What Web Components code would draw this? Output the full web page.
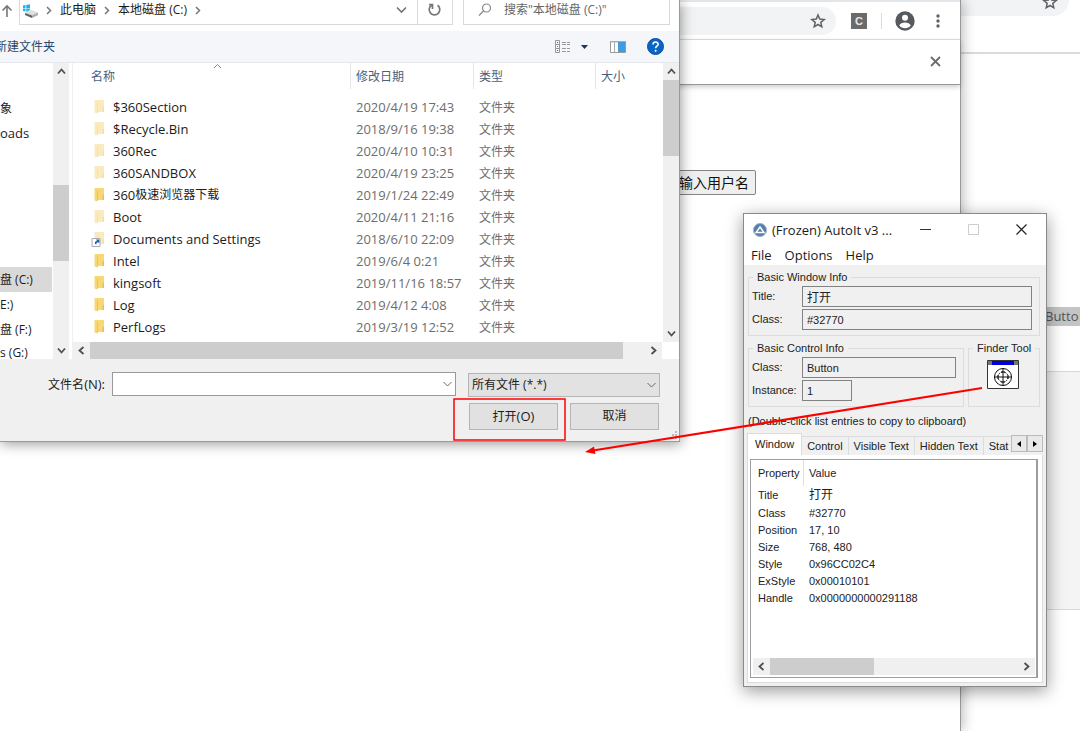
<!DOCTYPE html>
<html lang="zh-CN">
<head>
<meta charset="utf-8">
<title>打开</title>
<style>
html,body{margin:0;height:100%;background:#fff}
body{font:13px/18px "Open Sans","Noto Sans CJK SC",sans-serif;color:#1b1b1b;overflow:hidden}
</style>
</head>
<body>
<desktop-scene>
  <back-browser></back-browser>
  <front-browser></front-browser>
  <file-dialog></file-dialog>
  <autoit-window></autoit-window>
  <callout-marks></callout-marks>
</desktop-scene>
<script>
function define(name, html){
  const t=document.createElement('template');
  t.innerHTML='<style>*{box-sizing:border-box}:host{box-sizing:border-box}button,input,select{font:inherit;color:inherit;margin:0;border-radius:0;outline:none}.zh{font-size:12px}</style>'+html;
  customElements.define(name,class extends HTMLElement{
    constructor(){super();this.attachShadow({mode:'open'}).append(t.content.cloneNode(true));}
  });
}

define('desktop-scene',`
<style>:host{display:block;position:relative;width:100%;height:100vh;overflow:hidden;background:#fff}</style><slot></slot>`);

define('star-icon',`
<style>:host{display:block;width:16px;height:16px}svg{display:block}</style>
<svg width="16" height="16" viewBox="0 0 16 16" fill="none" stroke="#5f6368" stroke-width="1.5"><path d="M8 2l1.7 4.1 4.5.4-3.4 2.9 1 4.4L8 11.5l-3.8 2.3 1-4.4L1.800 6.500l4.500-.4z"/></svg>`);

customElements.define('scroll-bar',class extends HTMLElement{
  constructor(){
    super();
    this.attachShadow({mode:'open'}).innerHTML=`
<style>
:host{display:flex;box-sizing:border-box;background:#f0f0f0;flex:none;height:17px}
:host([vertical]){flex-direction:column;width:16px;height:auto}
button{border:0;padding:0;background:none;width:17px;height:17px;display:grid;place-items:center;flex:none}
:host([vertical]) button{width:16px}
.track{flex:1;display:flex;min-width:0;min-height:0}
:host([vertical]) .track{flex-direction:column}
.before{flex:0 0 var(--before,0%)}
.thumb{flex:0 0 var(--thumb,50%);background:#cdcdcd}
svg{fill:none;stroke:#505050;stroke-width:1.800}
svg.a{transform:rotate(-90deg)}svg.b{transform:rotate(90deg)}
:host([vertical]) svg.a{transform:none}:host([vertical]) svg.b{transform:rotate(180deg)}
</style>
<button aria-label="后退"><svg class="a" width="9" height="9" viewBox="0 0 9 9"><path d="M1 6.500l3.500-4 3.500 4"/></svg></button>
<div class="track"><div class="before"></div><div class="thumb"></div></div>
<button aria-label="前进"><svg class="b" width="9" height="9" viewBox="0 0 9 9"><path d="M1 6.500l3.500-4 3.500 4"/></svg></button>`;
  }
});

define('back-browser',`
<style>
:host{position:absolute;left:960px;right:0;top:0;bottom:0;display:flex;flex-direction:column;background:#fff}
.bar{height:54px;border-bottom:2px solid #dadada;padding-right:11px}
.pill{height:16px;background:#f1f3f4;border-radius:0 0 16px 0;display:flex;justify-content:flex-end;padding-right:11px}
star-icon{margin-top:-6px}
.page{flex:1;padding-top:253px;display:flex;flex-direction:column}
.hit{height:19px;line-height:19px;background:#c4c4c4;color:#555;padding-left:85px;white-space:nowrap}
.panel{margin-top:45px;height:239px;background:#f4f4f4;border:solid #d8d8d8;border-width:1px 0}
</style>
<div class="bar"><div class="pill"><star-icon></star-icon></div></div>
<div class="page"><div class="hit">Butto</div><div class="panel"></div></div>`);

define('front-browser',`
<style>
:host{position:absolute;left:0;width:961px;top:0;bottom:0;background:#fff;border-right:1px solid #999;box-shadow:2px 0 12px #0004;display:block}
.tabs{height:2px;background:#e2e6ea}
.bar{height:38px;display:flex;align-items:center;border-bottom:1px solid #dcdee0;padding-right:14px}
.pill{flex:1;height:28px;background:#f1f3f4;border-radius:0 14px 14px 0;display:flex;align-items:center;justify-content:flex-end;padding-right:10px}
.ext{width:16px;height:16px;margin-left:15px;background:#6b6b6b;color:#e8e8e8;font:bold 11px/16px "Liberation Sans",sans-serif;text-align:center;border:0;padding:0}
.sep{width:1px;height:16px;background:#d8dadd;margin:0 13px 0 14px}
.icon{display:block;padding:0;border:0;background:none}
.icon svg{display:block}
.menu{margin-left:15px}
.info{height:45px;border-bottom:1px solid #999;box-shadow:0 2px 5px #0003;display:flex;align-items:center;justify-content:flex-end;padding:0 19px 2px 0}
.page{padding:85px 204px 0 0;display:flex;justify-content:flex-end}
.name{font-size:14px;line-height:22px;height:25px;width:100px;padding:0 6px;border:1px solid #858585;border-radius:2px;background:#efefef;color:#111;white-space:nowrap;display:flex;align-items:center;justify-content:flex-end}
</style>
<div class="tabs"></div>
<div class="bar">
 <div class="pill"><star-icon></star-icon></div>
 <button class="ext">C</button><div class="sep"></div>
 <button class="icon" aria-label="用户"><svg width="20" height="20" viewBox="0 0 20 20"><circle cx="10" cy="10" r="9.700" fill="#56595e"/><circle cx="10" cy="6.700" r="3" fill="#fff"/><path d="M4.200 14.500c1.500-4 10.100-4 11.600 0-3 3.500-8.600 3.500-11.600 0z" fill="#fff"/></svg></button>
 <button class="icon menu" aria-label="菜单"><svg width="16" height="16" fill="#5f6368"><circle cx="8" cy="3" r="1.700"/><circle cx="8" cy="8" r="1.700"/><circle cx="8" cy="13" r="1.700"/></svg></button>
</div>
<div class="info"><button class="icon" aria-label="关闭"><svg width="11" height="11" stroke="#6a6d70" stroke-width="1.800"><path d="M1 1l9 9M10 1l-9 9"/></svg></button></div>
<div class="page"><button class="name">输入用户名</button></div>`);

define('folder-icon',`
<style>:host{display:block;width:14px;height:16px;--c:#f8d775;--d:#eebd4d}:host([pale]){--c:#fbeabb;--d:#f6dfa3}
svg{display:block;overflow:visible}.link{display:none}:host([link]) .link{display:block}</style>
<svg width="14" height="16" viewBox="0 0 14 16"><path d="M2 1h9v8l-1 1v3H4z" style="fill:var(--c)"/><path d="M1.500 1l3 2v11.500l-3-1z" style="fill:var(--c)"/><path d="M4 3l.8.5V14L4 13.800zM9.500 8.500l1.500-1V13H9.500z" style="fill:var(--d)"/><g class="link"><path d="M-1 7.500h8v8h-8z" fill="#fff" stroke="#aab"/><path d="M2 13c-.5-2 .5-3 2-3l-1-1.500h3.300v3.700L5 11.200c-1.200 0-1.800.8-1.500 2z" fill="#1f5da8"/></g></svg>`);

customElements.define('file-table',class extends HTMLElement{
  constructor(){
    super();
    const rows=[['$360Section','2020/4/19 17:43','pale'],['$Recycle.Bin','2018/9/16 19:38','pale'],['360Rec','2020/4/10 10:31','pale'],['360SANDBOX','2020/4/19 23:25','pale'],['360<span class="zh">极速浏览器下载</span>','2019/1/24 22:49',''],['Boot','2020/4/11 21:16','pale'],['Documents and Settings','2018/6/10 22:09','pale link'],['Intel','2019/6/4 0:21',''],['kingsoft','2019/11/16 18:57',''],['Log','2019/4/12 4:08',''],['PerfLogs','2019/3/19 12:52','']];
    this.attachShadow({mode:'open'}).innerHTML=`
<style>
:host{display:block;flex:1;min-width:0}
table{border-collapse:separate;border-spacing:0;width:100%;table-layout:fixed}
th,td{box-sizing:border-box}
th{height:26px;padding:2px 0 0 5px;text-align:left;font-weight:400;font-size:12px;color:#4c607a;border-right:1px solid #e3e5e8;background:#fff;position:relative}
th:first-child{padding-left:18px}th:last-child{border:0}
th svg{position:absolute;left:140px;top:0}
tbody::before{content:"";display:block;height:7px}
td{height:22px;padding:0 0 0 5px;line-height:18px;color:#6d6d6d;white-space:nowrap}
td:first-child{padding-left:20px;color:#1b1b1b}
td.zh{padding-top:2px}
.n{display:flex;align-items:center}
folder-icon{margin-right:6px}
.zh{font-size:12px}
</style>
<table><colgroup><col style="width:278px"><col style="width:123px"><col style="width:122px"><col></colgroup>
<thead><tr><th>名称<svg width="9" height="6" fill="none" stroke="#888"><path d="M1 5l3.500-3.500L8 5"/></svg></th><th>修改日期</th><th>类型</th><th>大小</th></tr></thead>
<tbody>${rows.map(r=>`<tr><td><div class="n"><folder-icon ${r[2]}></folder-icon>${r[0]}</div></td><td>${r[1]}</td><td class="zh">文件夹</td><td></td></tr>`).join('')}</tbody></table>`;
  }
});

define('file-dialog',`
<style>
:host{position:absolute;left:0;top:0;width:680px;background:#f0f0f0;border:solid #999;border-width:0 1px 1px 0;box-shadow:1px 2px 12px #0006;display:flex;flex-direction:column}
svg{display:block}
.icon{border:0;background:none;padding:0;display:block}
.addr{height:31px;background:#fff;display:flex;align-items:flex-start;padding-right:9px}
.up{width:19px;padding:4px 0 0 1px}
.path{flex:1;height:25px;border:1px solid #d9d9d9;border-top:0;display:flex;padding:0 10px 0 2px;font-size:12px}
.path>*{height:20px;display:flex;align-items:center}
.path a{color:inherit;text-decoration:none}
.crumb{width:22px;justify-content:center}
.grow{flex:1}
.refresh{width:35px;height:25px;border:1px solid #d9d9d9;border-width:0 1px 1px 0;padding:0 0 5px 9px}
.search{margin-left:10px;width:207px;height:25px;border:1px solid #d9d9d9;border-top:0;display:flex;padding:0 0 5px 13px;gap:11px;align-items:center}
.search input{border:0;background:none;padding:0;width:160px;height:20px;font-size:12px}
.search input::placeholder{color:#666;opacity:1}
.tools{height:32px;background:#f4f6f9;border-bottom:1px solid #e4e7eb;display:flex;align-items:center;padding-right:15px}
.new{margin-left:-5px;color:#2b4668;font-size:12px}
.view{margin:0 10px 0 auto}.drop{margin-right:22px}.pane{margin-right:21px}
.body{display:flex;height:296px;background:#fff}
nav{width:53px;padding-top:33px;display:flex;flex-direction:column;white-space:nowrap;font-size:12px}
nav a{height:25px;line-height:25px;color:inherit;text-decoration:none;flex:none}
nav .en{font-size:13px}
nav .gap{margin-top:121px}
nav .sel{background:#d9d9d9;margin-right:1px}
nav .last{height:18px;line-height:22px}
.main{flex:1;display:flex;flex-direction:column;min-width:0;margin-left:3px;border-left:1px solid #f0f0f0}
.top{flex:1;display:flex;min-height:0;overflow:hidden}
.main>scroll-bar{margin-right:17px}
.foot{display:grid;grid-template-columns:1fr 344px 192px;column-gap:12px;row-gap:6px;padding:13px 19px 11px 0}
.foot label{text-align:right;line-height:24px;margin-right:-5px}
.combo{display:flex;height:24px;border:1px solid #999;background:#fff;align-items:center;padding-right:3px}
.combo input{flex:1;border:0;min-width:0;background:none}
.sel-wrap{display:grid;align-items:center}
.sel-wrap select{grid-area:1/1;appearance:none;width:100%;height:24px;border:1px solid #b5b5b5;background:#e2e2e2;padding:0 3px;font-size:12px}
.sel-wrap svg{grid-area:1/1;justify-self:end;margin-right:4px}
.act{grid-column:3;display:flex;gap:12px;padding:0 1px}
.act button{flex:1;height:27px;background:#e1e1e1;border:1px solid #b5b5b5;padding:0 0 1px}
.grip{position:absolute;right:1px;bottom:2px}
</style>
<div class="addr">
 <button class="icon up" aria-label="上移"><svg width="12" height="14" fill="none" stroke="#777" stroke-width="1.600"><path d="M6 13V2M1.500 6.500L6 2l4.500 4.500"/></svg></button>
 <div class="path">
  <span><svg width="16" height="16"><path d="M1 3.500l2.500-.4v2.800H1zM4.200 3L8 2.300v3.600H4.200zM1 6.600h2.500v2.800L1 9zM4.200 6.600H8v3.600l-3.800-.6z" fill="#19b5e8"/><path d="M3 11l5-3.500 8 3-6 3z" fill="#dcdedf"/><path d="M3 11l7 2.500V16l-7-3z" fill="#5b6062"/><path d="M10 13.500l6-3V13l-6 3z" fill="#a7abad"/></svg></span>
  <span class="crumb"><svg width="6" height="9" fill="none" stroke="#777" stroke-width="1.500"><path d="M1 1l3.500 3.500L1 8"/></svg></span><a href="#">此电脑</a>
  <span class="crumb"><svg width="6" height="9" fill="none" stroke="#777" stroke-width="1.500"><path d="M1 1l3.500 3.500L1 8"/></svg></span><a href="#">本地磁盘 (C:)</a>
  <span class="crumb"><svg width="6" height="9" fill="none" stroke="#777" stroke-width="1.500"><path d="M1 1l3.500 3.500L1 8"/></svg></span>
  <span class="grow"></span><span><svg width="11" height="8" fill="none" stroke="#777" stroke-width="1.700"><path d="M1 1.500l4.500 4.500L10 1.500"/></svg></span>
 </div>
 <button class="icon refresh" aria-label="刷新"><svg width="15" height="15" viewBox="0 0 15 15" fill="none" stroke="#777" stroke-width="1.700"><path d="M10.500 3.200A5.300 5.300 0 1 1 4.500 3.200M5.500 7V2.500H2"/></svg></button>
 <div class="search"><svg width="16" height="15" fill="none" stroke="#888" stroke-width="1.200"><circle cx="9.500" cy="6" r="4"/><path d="M6.500 9l-4.500 4.500"/></svg><input aria-label="搜索" placeholder='搜索"本地磁盘 (C:)"'></div>
</div>
<div class="tools">
 <button class="icon new">新建文件夹</button>
 <button class="icon view" aria-label="视图"><svg width="16" height="13" fill="none" stroke="#999"><path d="M.5.5h4v12h-4zM.5 4.500h4M.5 8.500h4M7 2.500h4M12 2.500h3M7 4.500h4M12 4.500h3M7 8.500h4M12 8.500h3M7 11.500h4M12 11.500h3"/><path d="M2 2.500h1M2 10.500h1" stroke="#b33"/><path d="M2 6.500h1" stroke="#3b5"/></svg></button>
 <button class="icon drop" aria-label="更多"><svg width="7" height="4"><path d="M0 0h7L3.500 4z" fill="#1d3557"/></svg></button>
 <button class="icon pane" aria-label="预览窗格"><svg width="16" height="12"><path d="M.5.5h15v11H.5z" fill="#fff" stroke="#999"/><path d="M1 1h14" stroke="#bbb"/><path d="M4.500 1v10" stroke="#aaa"/><path d="M8 1h7v10H8z" fill="#3f9be3"/></svg></button>
 <button class="icon" aria-label="帮助"><svg width="17" height="17" viewBox="0 0 17 17"><circle cx="8.500" cy="8.500" r="8" fill="#0a66c4" stroke="#0a4f9e"/><path d="M6 6.500c0-3.400 5.200-3.200 5.200-.3 0 1.900-2.600 2-2.600 4" fill="none" stroke="#fff" stroke-width="1.600"/><circle cx="8.600" cy="12.700" r="1" fill="#fff"/></svg></button>
</div>
<div class="body">
 <nav><a href="#">象</a><a href="#" class="en">oads</a><a href="#" class="gap sel">盘 (C:)</a><a href="#">E:)</a><a href="#">盘 (F:)</a><a href="#" class="last">s (G:)</a></nav>
 <scroll-bar vertical style="--before:40%;--thumb:29%"></scroll-bar>
 <div class="main"><div class="top"><file-table></file-table><scroll-bar vertical style="--before:0%;--thumb:31%"></scroll-bar></div>
 <scroll-bar style="--before:0%;--thumb:96%"></scroll-bar></div>
</div>
<div class="foot">
 <label for="fn"><span class="zh">文件名</span>(N):</label>
 <div class="combo"><input id="fn"><svg width="9" height="6" fill="none" stroke="#666"><path d="M.5 1l4 4 4-4"/></svg></div>
 <div class="sel-wrap"><select aria-label="文件类型"><option>所有文件 (*.*)</option></select><svg width="9" height="6" fill="none" stroke="#666"><path d="M.5 1l4 4 4-4"/></svg></div>
 <div class="act"><button><span class="zh">打开</span>(O)</button><button class="zh">取消</button></div>
</div>
<svg class="grip" width="8" height="8" fill="#bbb"><path d="M5 0h2v2H5zM5 3h2v2H5zM5 6h2v2H5zM2 3h2v2H2zM2 6h2v2H2z"/></svg>`);

define('group-box',`
<style>
:host{display:block;min-width:0}
fieldset{margin:0;height:100%;min-width:0;border:1px solid #dcdcdc;padding:2px 7px 5px 3px}
legend{padding:0 4px;margin-left:1px;line-height:14px;white-space:nowrap}
.in{display:flex;flex-direction:column;gap:2px}
</style>
<fieldset><legend><slot name="title"></slot></legend><div class="in"><slot></slot></div></fieldset>`);

customElements.define('info-field',class extends HTMLElement{
  constructor(){
    super();
    this.attachShadow({mode:'open'}).innerHTML=`
<style>
:host{display:grid;grid-template-columns:50px 1fr;align-items:center;height:21px}
:host([short]){grid-template-columns:50px 50px}
label{line-height:18px;white-space:nowrap;padding-bottom:2px}
input{box-sizing:border-box;width:100%;height:21px;border:1px solid #828282;background:#f0f0f0;font:inherit;color:inherit;padding:0 4px;margin:0;border-radius:0}
:host([zh]) input{font-size:12px}
</style><label for="v">${this.getAttribute('label')}</label><input id="v" readonly value="${this.getAttribute('value')}">`;
  }
});

define('autoit-window',`
<style>
:host{position:absolute;left:743px;top:213px;width:304px;border:1px solid #8a8a8a;background:#f0f0f0;box-shadow:0 4px 16px #0006;display:flex;flex-direction:column;font:11px/14px "Liberation Sans","Noto Sans CJK SC",sans-serif;color:#222}
svg{display:block}
.title{height:31px;background:#fff;display:flex;align-items:center;padding:0 19px 0 9px;font:13px/18px "Open Sans","Noto Sans CJK SC",sans-serif;color:#1b1b1b}
.title>svg{flex:none}
.title span{flex:1;margin-left:5px;white-space:nowrap}
.title button,.menu button{border:0;background:none;padding:0}
.title button+button{margin-left:37px}
.menu{height:20px;background:#fff;display:flex;gap:13px;padding-left:7px;font:13px/18px "Open Sans",sans-serif;color:#1b1b1b}
.content{padding:5px 3px 3px}
.groups{display:grid;grid-template-columns:1fr 72px;column-gap:4px;row-gap:5px;padding:0 3px 0 1px}
.wide{grid-column:1/3;height:66px}.mid{height:66px}
.finder{padding:3px 0 0 15px}
.hint{margin:7px 0 5px 1px;white-space:nowrap}
.tabs{display:flex;align-items:flex-end;height:22px}
.tabs button{height:19px;background:#f0f0f0;border:1px solid #dcdcdc;border-width:1px 1px 0 0;padding:0 5px;white-space:nowrap;flex:none}
.tabs button[aria-selected=true]{height:22px;background:#fff;padding:0 7px 2px;border-left-width:1px}
.tabs .cut{flex:1;min-width:0;text-align:left;border-right:0;padding-right:0}
.tabs .step{width:16px;height:17px;padding:0;align-self:flex-start;margin-top:2px;border:1px solid #bbb;display:grid;place-items:center;background:#e9e9e9}
.sheet{background:#fff;border:1px solid #dcdcdc;border-top:0;padding:4px 4px 4px 2px}
.list{border:2px solid #9a9ea3;border-width:1px 2px 1px 1px;height:219px;display:flex;flex-direction:column;padding:0 1px 2px 2px}
table{border-spacing:0;table-layout:fixed;width:100%}
th{font-weight:400;text-align:left;height:26px;padding:0 0 0 5px}
th+th{border-left:1px solid #e0e0e0}
td{padding:0 0 0 5px;height:17px;line-height:17px;white-space:nowrap}
td+td{padding-left:6px}
tbody tr:first-child td{height:19px}
.fill{flex:1}
</style>
<div class="title"><svg width="14" height="14" viewBox="0 0 14 14"><circle cx="7" cy="7" r="6.500" fill="#577fae" stroke="#9aafc9"/><path d="M7 4l4 5.500H3z" fill="none" stroke="#fff" stroke-width="1.400"/></svg><span>(Frozen) AutoIt v3 ...</span>
<button aria-label="最小化"><svg width="11" height="11" stroke="#333"><path d="M0 5.500h11"/></svg></button><button aria-label="最大化"><svg width="11" height="11" fill="none" stroke="#ccc"><path d="M.5.5h10v10H.5z"/></svg></button><button aria-label="关闭"><svg width="11" height="11" stroke="#222" stroke-width="1.200"><path d="M.5.5l10 10M10.500.5l-10 10"/></svg></button></div>
<div class="menu"><button>File</button><button>Options</button><button>Help</button></div>
<div class="content">
 <div class="groups">
  <group-box class="wide"><span slot="title">Basic Window Info</span><info-field zh label="Title:" value="打开"></info-field><info-field label="Class:" value="#32770"></info-field></group-box>
  <group-box class="mid"><span slot="title">Basic Control Info</span><info-field label="Class:" value="Button"></info-field><info-field short label="Instance:" value="1"></info-field></group-box>
  <group-box class="mid"><span slot="title">Finder Tool</span><div class="finder"><svg width="32" height="30" viewBox="0 0 32 30"><path d="M.5.5h31v28H.5z" fill="#fff" stroke="#333"/><path d="M1 1h30v4H1z" fill="#00d"/><path d="M1 1h4v4H1zM27 1h4v4h-4z" fill="#777"/><g fill="none" stroke="#111"><circle cx="16" cy="17" r="8.500"/><circle cx="16" cy="17" r="5" stroke-dasharray="2 1"/><path d="M16 8v18M7 17h18M14 12h4M14 22h4M11 15v4M21 15v4"/></g></svg></div></group-box>
 </div>
 <div class="hint">(Double-click list entries to copy to clipboard)</div>
 <div class="tabs" role="tablist"><button role="tab" aria-selected="true">Window</button><button role="tab">Control</button><button role="tab">Visible Text</button><button role="tab">Hidden Text</button><button role="tab" class="cut">Stat</button><button class="step" aria-label="左"><svg width="4" height="6"><path d="M4 0v6L0 3z"/></svg></button><button class="step" aria-label="右"><svg width="4" height="6"><path d="M0 0v6l4-3z"/></svg></button></div>
 <div class="sheet"><div class="list">
  <table><colgroup><col style="width:50px"><col></colgroup><thead><tr><th>Property</th><th>Value</th></tr></thead>
  <tbody><tr><td>Title</td><td class="zh">打开</td></tr><tr><td>Class</td><td>#32770</td></tr><tr><td>Position</td><td>17, 10</td></tr><tr><td>Size</td><td>768, 480</td></tr><tr><td>Style</td><td>0x96CC02C4</td></tr><tr><td>ExStyle</td><td>0x00010101</td></tr><tr><td>Handle</td><td>0x0000000000291188</td></tr></tbody></table>
  <div class="fill"></div><scroll-bar style="--before:0%;--thumb:42%"></scroll-bar>
 </div></div>
</div>`);

define('callout-marks',`
<style>:host{position:absolute;left:453px;top:385px;width:532px;height:70px;pointer-events:none}svg{display:block}</style>
<svg width="532" height="70" viewBox="0 0 532 70" fill="none" stroke="#f00"><path d="M1 14h111v41H1z" stroke-width="1.500"/><path d="M529 3L140 65.500" stroke-width="2.200"/><path d="M132 67l9-5.500 1.500 7.500z" fill="#f00" stroke="none"/></svg>`);
</script>
</body>
</html>
